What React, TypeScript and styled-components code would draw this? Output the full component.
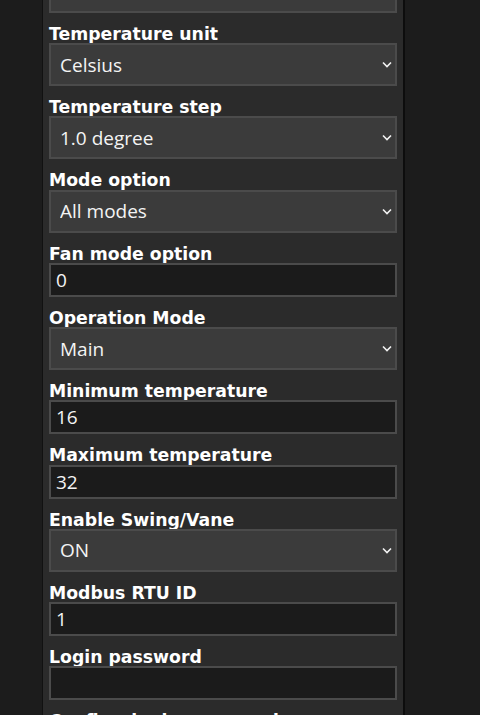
import React from "react";
import styled, { createGlobalStyle } from "styled-components";

type Field =
  | { kind: "select"; label: string; value: string; options?: string[] }
  | { kind: "input"; label: string; value: string; type?: string };

const fields: Field[] = [
  { kind: "select", label: "AC brand", value: "Gree" },
  { kind: "select", label: "Temperature unit", value: "Celsius", options: ["Celsius", "Fahrenheit"] },
  { kind: "select", label: "Temperature step", value: "1.0 degree", options: ["0.5 degree", "1.0 degree"] },
  { kind: "select", label: "Mode option", value: "All modes" },
  { kind: "input", label: "Fan mode option", value: "0" },
  { kind: "select", label: "Operation Mode", value: "Main" },
  { kind: "input", label: "Minimum temperature", value: "16" },
  { kind: "input", label: "Maximum temperature", value: "32" },
  { kind: "select", label: "Enable Swing/Vane", value: "ON", options: ["ON", "OFF"] },
  { kind: "input", label: "Modbus RTU ID", value: "1" },
  { kind: "input", label: "Login password", value: "", type: "password" },
  { kind: "input", label: "Confirm login password", value: "", type: "password" },
];

const Chevron = () => (
  <ChevronIcon width="10" height="7" viewBox="0 0 10 7">
    <path d="M1 1.5 L5 5.5 L9 1.5" fill="none" stroke="#f2f2f2" strokeWidth="1.6" />
  </ChevronIcon>
);

const App = () => {
  return (
    <Page>
      <GlobalStyle />
      <Panel>
        {fields.map((f, i) => (
          <Row key={i}>
            {i > 0 && <Label>{f.label}</Label>}
            {f.kind === "select" ? (
              <SelectWrap>
                <Select defaultValue={f.value}>
                  {(f.options || [f.value]).map((o) => (
                    <option key={o}>{o}</option>
                  ))}
                </Select>
                <Chevron />
              </SelectWrap>
            ) : (
              <Input type={f.type || "text"} defaultValue={f.value} />
            )}
          </Row>
        ))}
      </Panel>
    </Page>
  );
};

export default App;

const GlobalStyle = createGlobalStyle`
  html, body {
    margin: 0;
    padding: 0;
    background: #1c1c1c;
    overflow: hidden;
  }
`;

const Page = styled.div`
  width: 480px;
  height: 715px;
  overflow: hidden;
  background: #1c1c1c;
`;

const Panel = styled.div`
  width: 363px;
  margin-left: 42px;
  margin-top: -30px;
  padding: 0 5px 40px 6px;
  box-sizing: border-box;
  background: #2b2b2b;
  border-left: 1px solid #111111;
  border-right: 2px solid #0d0d0d;
`;

const Row = styled.div`
  display: flex;
  flex-direction: column;
`;

const Label = styled.label`
  display: block;
  margin-top: 10px;
  padding-top: 2px;
  height: 18.22px;
  line-height: 18px;
  font-family: "DejaVu Sans", Verdana, sans-serif;
  font-weight: bold;
  font-size: 17.3px;
  color: #ffffff;
  white-space: nowrap;
`;

const SelectWrap = styled.div`
  position: relative;
  width: 348px;
`;

const Select = styled.select`
  appearance: none;
  -webkit-appearance: none;
  display: block;
  width: 348px;
  height: 43px;
  box-sizing: border-box;
  margin: 0;
  padding: 0 30px 0 9px;
  background: #3b3b3b;
  border: 2px solid #4b4b4b;
  border-radius: 0;
  color: #f4f4f4;
  font-family: "Open Sans", "Noto Sans", sans-serif;
  font-size: 19px;
  outline: none;
`;

const ChevronIcon = styled.svg`
  position: absolute;
  right: 5px;
  top: 18px;
  pointer-events: none;
`;

const Input = styled.input`
  display: block;
  width: 348px;
  height: 34px;
  box-sizing: border-box;
  margin: 0;
  padding: 0 5px;
  background: #1b1b1b;
  border: 2px solid #4b4b4b;
  border-radius: 0;
  color: #f4f4f4;
  font-family: "Open Sans", "Noto Sans", sans-serif;
  font-size: 19px;
  outline: none;
`;
